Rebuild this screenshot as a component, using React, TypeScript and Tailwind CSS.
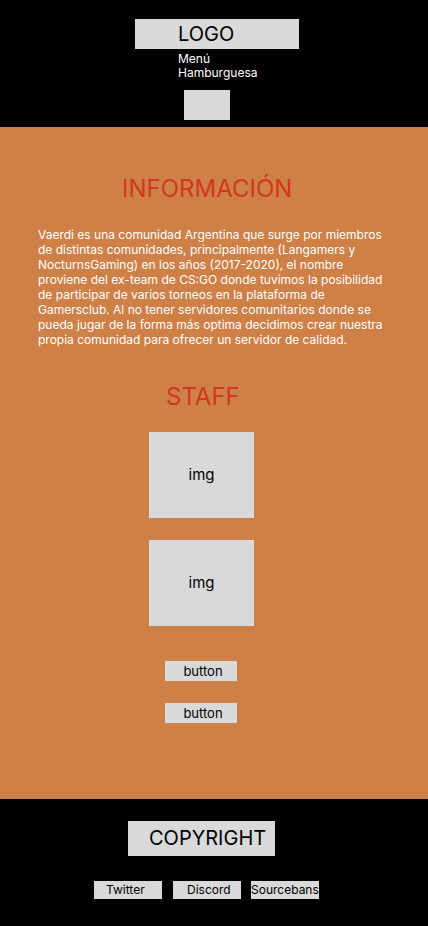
export default function App() {
  const font = "font-['Inter','Liberation_Sans',sans-serif]";
  return (
    <div className={`w-[428px] ${font}`}>
      {/* header */}
      <header className="bg-black h-[127px] pt-[19px]">
        <div className="ml-[135px] w-[164px] h-[30px] bg-[#d9d9d9] pl-[43px] text-[20px] leading-[30px] text-black">
          LOGO
        </div>
        <div className="ml-[178px] mt-[3px] text-[12px] leading-[14px] text-white">
          Menú
          <br />
          Hamburguesa
        </div>
        <div className="ml-[184px] mt-[10px] w-[46px] h-[30px] bg-[#d9d9d9]" />
      </header>

      {/* main */}
      <main className="bg-[#ce8047] h-[672px] pt-[47px] flex flex-col items-start">
        <h1 className="ml-[122px] text-[24px] leading-[30px] text-[#d3371c]">INFORMACIÓN</h1>
        <p className="mt-[23px] ml-[38px] w-[352px] text-[12px] leading-[15px] text-white">
          Vaerdi es una comunidad Argentina que surge por miembros de distintas comunidades, principalmente (Langamers y
          NocturnsGaming) en los años (2017-2020), el nombre proviene del ex-team de CS:GO donde tuvimos la posibilidad de
          participar de varios torneos en la plataforma de Gamersclub. Al no tener servidores comunitarios donde se pueda
          jugar de la forma más optima decidimos crear nuestra propia comunidad para ofrecer un servidor de calidad.
        </p>
        <h2 className="mt-[35px] ml-[166px] text-[24px] leading-[30px] text-[#d3371c]">STAFF</h2>
        <div className="mt-[20px] ml-[149px] w-[105px] h-[86px] bg-[#d9d9d9] flex items-center justify-center text-[15px] text-black">
          img
        </div>
        <div className="mt-[22px] ml-[149px] w-[105px] h-[86px] bg-[#d9d9d9] flex items-center justify-center text-[15px] text-black">
          img
        </div>
        <button className="mt-[35px] ml-[165px] w-[72px] h-[20px] bg-[#d9d9d9] text-[13px] leading-[20px] text-black pl-[4px]">
          button
        </button>
        <button className="mt-[22px] ml-[165px] w-[72px] h-[20px] bg-[#d9d9d9] text-[13px] leading-[20px] text-black pl-[4px]">
          button
        </button>
      </main>

      {/* footer */}
      <footer className="bg-black h-[127px] pt-[22px]">
        <div className="ml-[128px] w-[147px] h-[35px] bg-[#d9d9d9] pl-[21px] text-[20px] leading-[35px] text-black">
          COPYRIGHT
        </div>
        <div className="mt-[25px] ml-[94px] flex gap-[11px] text-[12px] leading-[18px] text-black">
          <a className="w-[68px] h-[18px] bg-[#d9d9d9] pl-[12px]">Twitter</a>
          <a className="w-[68px] h-[18px] bg-[#d9d9d9] pl-[14px]">Discord</a>
          <a className="w-[68px] h-[18px] bg-[#d9d9d9] -ml-[1px]">Sourcebans</a>
        </div>
      </footer>
    </div>
  );
}
